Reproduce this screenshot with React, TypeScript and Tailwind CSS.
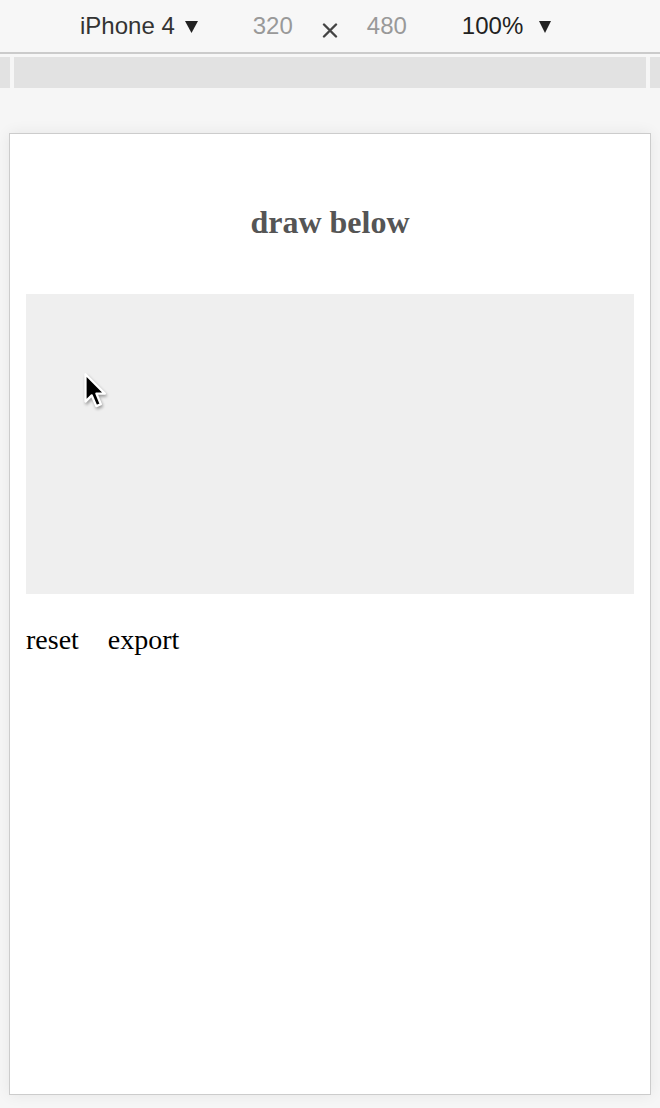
import React from "react";

function Tri({ w }: { w: number }) {
  return (
    <svg width={w} height="12" viewBox="0 0 13 12" preserveAspectRatio="none" className="block">
      <path d="M0 0 L13 0 L6.5 12 Z" fill="#222" />
    </svg>
  );
}

function Cursor() {
  return (
    <svg width="30" height="41" viewBox="0 0 26 36" className="block" style={{ filter: "drop-shadow(1px 2px 1.5px rgba(0,0,0,0.35))" }}>
      <path
        d="M2 2 L2 26 L7.5 20.5 L11.5 30 L15.5 28.3 L11.6 19 L19 19 Z"
        fill="#000"
        stroke="#fff"
        strokeWidth="2"
        strokeLinejoin="round"
      />
    </svg>
  );
}

export default function App() {
  return (
    <div className="w-[660px] h-[1108px] bg-[#f6f6f6] flex flex-col overflow-hidden" style={{ fontFamily: "'Liberation Sans', Arial, sans-serif" }}>
      <div className="h-[52px] bg-[#f7f7f7] flex items-center text-[24px] leading-none">
        <span className="ml-[80px] text-[#333]">iPhone 4</span>
        <span className="ml-[10px] mt-[1px]"><Tri w={13} /></span>
        <span className="ml-[55px] text-[#999]">320</span>
        <span className="ml-[29px] mt-[8px]">
          <svg width="16" height="15" viewBox="0 0 16 15" className="block">
            <path d="M2 1.5 L14 13.5 M14 1.5 L2 13.5" stroke="#444" strokeWidth="2.4" strokeLinecap="round" />
          </svg>
        </span>
        <span className="ml-[29px] text-[#999]">480</span>
        <span className="ml-[55px] text-[#222]">100%</span>
        <span className="ml-[16px] mt-[1px]"><Tri w={12} /></span>
      </div>
      <div className="h-[2px] bg-[#cbcbcb]" />
      <div className="h-[3px] bg-[#f7f7f7]" />
      <div className="h-[31px] bg-[#e2e2e2] flex">
        <div className="w-[10px]" />
        <div className="w-[4px] bg-[#f6f6f6]" />
        <div className="flex-1" />
        <div className="w-[4px] bg-[#f6f6f6]" />
        <div className="w-[10px]" />
      </div>
      <div className="h-[45px]" />
      <div
        className="ml-[9px] w-[642px] h-[962px] border border-[#cccccc] bg-white shadow-[0_0_14px_rgba(0,0,0,0.07)] flex flex-col"
        style={{ fontFamily: "'Liberation Serif', 'Times New Roman', serif" }}
      >
        <h1 className="mt-[70px] text-center text-[32px] leading-[37px] font-bold text-[#555]">draw below</h1>
        <div className="mt-[53px] mx-[16px] h-[300px] bg-[#efefef] relative">
          <div className="absolute left-[57px] top-[78px]">
            <Cursor />
          </div>
        </div>
        <div className="mt-[30px] mx-[16px] flex gap-[29px] text-[28px] leading-[32px] text-black">
          <span>reset</span>
          <span>export</span>
        </div>
      </div>
    </div>
  );
}
